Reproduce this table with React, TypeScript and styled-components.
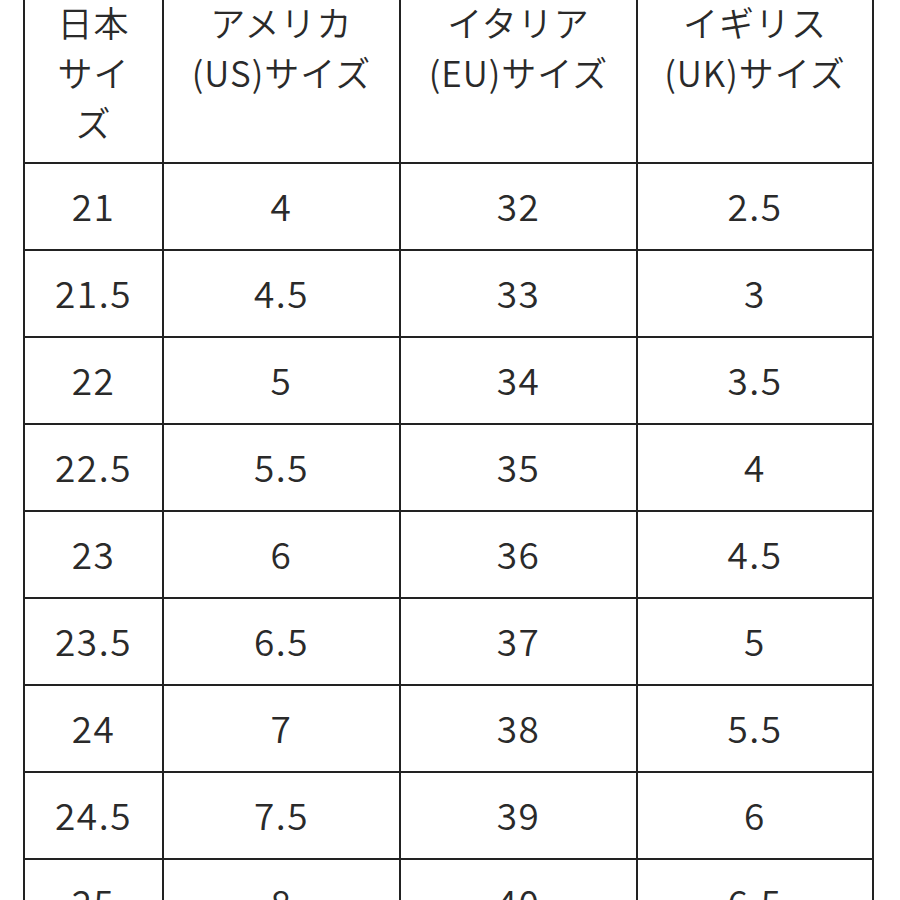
import styled, { createGlobalStyle } from "styled-components";

const GlobalStyle = createGlobalStyle`
  body {
    margin: 0;
    background: #ffffff;
    font-family: "Noto Sans CJK JP", "Noto Sans", sans-serif;
    color: #2a2a2a;
  }
`;

const Chart = styled.div`
  display: grid;
  grid-template-columns: 137px 235px 235px 234px;
  grid-template-rows: 165px;
  grid-auto-rows: 85px;
  gap: 2px;
  padding: 2px;
  width: max-content;
  margin: -5px 0 0 23px;
  background: #222222;
`;

const HeadCell = styled.div`
  background: #ffffff;
  font-size: 35px;
  font-weight: 350;
  line-height: 50px;
  text-align: center;
  letter-spacing: 1px;
`;

const Cell = styled.div`
  background: #ffffff;
  display: flex;
  align-items: center;
  justify-content: center;
  padding-bottom: 4px;
  font-size: 37px;
  font-weight: 350;
  letter-spacing: 1.5px;
`;

const headers = [
  ["日本", "サイ", "ズ"],
  ["アメリカ", "(US)サイズ"],
  ["イタリア", "(EU)サイズ"],
  ["イギリス", "(UK)サイズ"],
];

const rows = [
  ["21", "4", "32", "2.5"],
  ["21.5", "4.5", "33", "3"],
  ["22", "5", "34", "3.5"],
  ["22.5", "5.5", "35", "4"],
  ["23", "6", "36", "4.5"],
  ["23.5", "6.5", "37", "5"],
  ["24", "7", "38", "5.5"],
  ["24.5", "7.5", "39", "6"],
  ["25", "8", "40", "6.5"],
];

const App = () => {
  return (
    <>
      <GlobalStyle />
      <Chart>
        {headers.map((lines, i) => (
          <HeadCell key={`h${i}`}>
            {lines.map((line, j) => (
              <div key={j}>{line}</div>
            ))}
          </HeadCell>
        ))}
        {rows.map((row, r) =>
          row.map((value, c) => <Cell key={`${r}-${c}`}>{value}</Cell>)
        )}
      </Chart>
    </>
  );
};

export default App;
